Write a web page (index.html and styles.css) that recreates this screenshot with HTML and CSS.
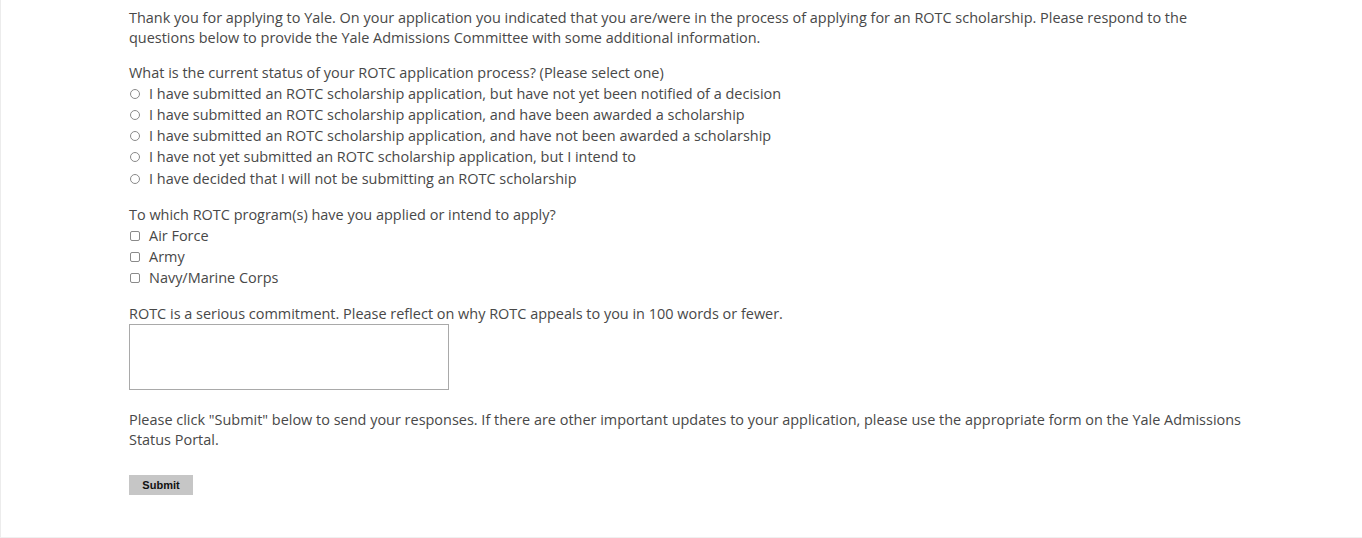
FILE: index.html
```html
<!DOCTYPE html>
<html>
<head>
<meta charset="utf-8">
<link rel="stylesheet" href="styles.css">
</head>
<body>
<div class="frame">
  <form class="form">
    <p class="intro">Thank you for applying to Yale. On your application you indicated that you are/were in the process of applying for an ROTC scholarship. Please respond to the questions below to provide the Yale Admissions Committee with some additional information.</p>

    <div class="question">
      <div class="label">What is the current status of your ROTC application process? (Please select one)</div>
      <label class="option"><input type="radio" name="status" class="radio"><span>I have submitted an ROTC scholarship application, but have not yet been notified of a decision</span></label>
      <label class="option"><input type="radio" name="status" class="radio"><span>I have submitted an ROTC scholarship application, and have been awarded a scholarship</span></label>
      <label class="option"><input type="radio" name="status" class="radio"><span>I have submitted an ROTC scholarship application, and have not been awarded a scholarship</span></label>
      <label class="option"><input type="radio" name="status" class="radio"><span>I have not yet submitted an ROTC scholarship application, but I intend to</span></label>
      <label class="option"><input type="radio" name="status" class="radio"><span>I have decided that I will not be submitting an ROTC scholarship</span></label>
    </div>

    <div class="question question-programs">
      <div class="label">To which ROTC program(s) have you applied or intend to apply?</div>
      <label class="option"><input type="checkbox" class="check"><span>Air Force</span></label>
      <label class="option"><input type="checkbox" class="check"><span>Army</span></label>
      <label class="option"><input type="checkbox" class="check"><span>Navy/Marine Corps</span></label>
    </div>

    <div class="question question-essay">
      <div class="label">ROTC is a serious commitment. Please reflect on why ROTC appeals to you in 100 words or fewer.</div>
      <textarea class="essay"></textarea>
    </div>

    <p class="outro">Please click "Submit" below to send your responses. If there are other important updates to your application, please use the appropriate form on the Yale Admissions Status Portal.</p>

    <button type="button" class="submit">Submit</button>
  </form>
</div>
</body>
</html>
```

FILE: styles.css
```css
html, body {
  margin: 0;
  padding: 0;
  background: #fff;
}
.frame {
  height: 537px;
  border-left: 1px solid #ececec;
  border-bottom: 1px solid #f0f0f0;
  box-sizing: content-box;
}
.form {
  padding: 8px 110px 0 128px;
  font-family: "Open Sans", "Noto Sans", sans-serif;
  font-size: 14.46px;
  line-height: 20px;
  color: #484848;
}
.intro {
  margin: 0;
}
.question {
  margin-top: 15px;
}
.question-programs {
  margin-top: 16px;
}
.question-essay {
  margin-top: 15px;
}
.label {
  line-height: 20px;
}
.option {
  display: flex;
  align-items: center;
  height: 21.25px;
}
.radio, .check {
  appearance: none;
  -webkit-appearance: none;
  margin: 0 9px 0 1px;
  width: 10px;
  height: 10px;
  border: 1px solid #8a8a8a;
  background: #fff;
  box-sizing: border-box;
  flex: none;
}
.radio {
  border-radius: 50%;
}
.check {
  border-radius: 2px;
}
.essay {
  display: block;
  width: 320px;
  height: 66px;
  margin: 0;
  padding: 0;
  border: 1px solid #a9a9a9;
  box-sizing: border-box;
  resize: none;
}
.outro {
  margin: 20px 0 0;
}
.submit {
  display: block;
  margin: 25px 0 0 0;
  width: 64px;
  height: 20px;
  padding: 0;
  border: none;
  background: #c6c6c6;
  font-family: "Liberation Sans", Arial, sans-serif;
  font-weight: bold;
  font-size: 11px;
  color: #111;
}
```
